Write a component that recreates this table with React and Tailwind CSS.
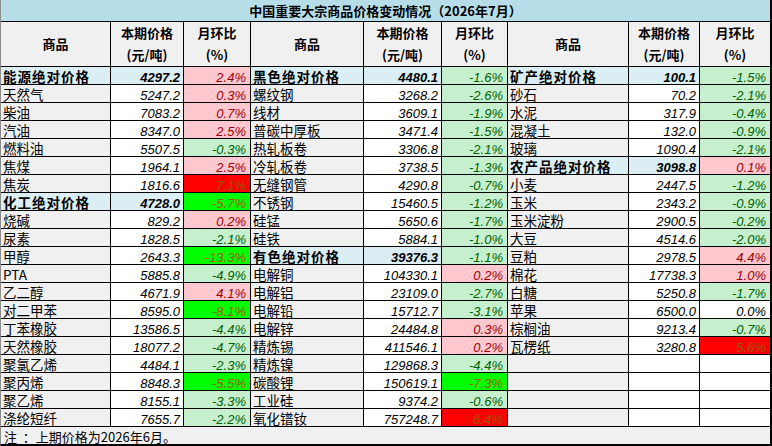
import React from 'react';

// 商品数据：[名称, 本期价格, 月环比, 色标, 是否分类]
// 色标: r 浅红, g 浅绿, R 大红, G 亮绿, n 无
const left = [
  ['能源绝对价格', '4297.2', '2.4%', 'r', true],
  ['天然气', '5247.2', '0.3%', 'r'],
  ['柴油', '7083.2', '0.7%', 'r'],
  ['汽油', '8347.0', '2.5%', 'r'],
  ['燃料油', '5507.5', '-0.3%', 'g'],
  ['焦煤', '1964.1', '2.5%', 'r'],
  ['焦炭', '1816.6', '7.1%', 'R'],
  ['化工绝对价格', '4728.0', '-5.7%', 'G', true],
  ['烧碱', '829.2', '0.2%', 'r'],
  ['尿素', '1828.5', '-2.1%', 'g'],
  ['甲醇', '2643.3', '-13.3%', 'G'],
  ['PTA', '5885.8', '-4.9%', 'g'],
  ['乙二醇', '4671.9', '4.1%', 'r'],
  ['对二甲苯', '8595.0', '-8.1%', 'G'],
  ['丁苯橡胶', '13586.5', '-4.4%', 'g'],
  ['天然橡胶', '18077.2', '-4.7%', 'g'],
  ['聚氯乙烯', '4484.1', '-2.3%', 'g'],
  ['聚丙烯', '8848.3', '-5.5%', 'G'],
  ['聚乙烯', '8155.1', '-3.3%', 'g'],
  ['涤纶短纤', '7655.7', '-2.2%', 'g'],
];

const middle = [
  ['黑色绝对价格', '4480.1', '-1.6%', 'g', true],
  ['螺纹钢', '3268.2', '-2.6%', 'g'],
  ['线材', '3609.1', '-1.9%', 'g'],
  ['普碳中厚板', '3471.4', '-1.5%', 'g'],
  ['热轧板卷', '3306.8', '-2.1%', 'g'],
  ['冷轧板卷', '3738.5', '-1.3%', 'g'],
  ['无缝钢管', '4290.8', '-0.7%', 'g'],
  ['不锈钢', '15460.5', '-1.2%', 'g'],
  ['硅锰', '5650.6', '-1.7%', 'g'],
  ['硅铁', '5884.1', '-1.0%', 'g'],
  ['有色绝对价格', '39376.3', '-1.1%', 'g', true],
  ['电解铜', '104330.1', '0.2%', 'r'],
  ['电解铝', '23109.0', '-2.7%', 'g'],
  ['电解铅', '15712.7', '-3.1%', 'g'],
  ['电解锌', '24484.8', '0.3%', 'r'],
  ['精炼锡', '411546.1', '0.2%', 'r'],
  ['精炼镍', '129868.3', '-4.4%', 'g'],
  ['碳酸锂', '150619.1', '-7.3%', 'G'],
  ['工业硅', '9374.2', '-0.6%', 'g'],
  ['氧化镨钕', '757248.7', '6.4%', 'R'],
];

const right = [
  ['矿产绝对价格', '100.1', '-1.5%', 'g', true],
  ['砂石', '70.2', '-2.1%', 'g'],
  ['水泥', '317.9', '-0.4%', 'g'],
  ['混凝土', '132.0', '-0.9%', 'g'],
  ['玻璃', '1090.4', '-2.1%', 'g'],
  ['农产品绝对价格', '3098.8', '0.1%', 'r', true],
  ['小麦', '2447.5', '-1.2%', 'g'],
  ['玉米', '2343.2', '-0.9%', 'g'],
  ['玉米淀粉', '2900.5', '-0.2%', 'g'],
  ['大豆', '4514.6', '-2.0%', 'g'],
  ['豆粕', '2978.5', '4.4%', 'r'],
  ['棉花', '17738.3', '1.0%', 'r'],
  ['白糖', '5250.8', '-1.7%', 'g'],
  ['苹果', '6500.0', '0.0%', 'n'],
  ['棕榈油', '9213.4', '-0.7%', 'g'],
  ['瓦楞纸', '3280.8', '5.6%', 'R'],
  ['', '', '', 'n'],
  ['', '', '', 'n'],
  ['', '', '', 'n'],
  ['', '', '', 'n'],
];

const pctStyle = {
  r: 'bg-[#ffc7ce] text-[#9c0006]',
  g: 'bg-[#c6efce] text-[#006100]',
  R: 'bg-[#ff0000] text-[#9c5700]',
  G: 'bg-[#00ff00] text-[#9c5700]',
  n: 'bg-white text-black',
};

const cjk = "font-['Noto_Sans_CJK_SC',sans-serif]";
const num = "font-['Liberation_Sans','Noto_Sans_CJK_SC',sans-serif]";

const HeaderCells = () => (
  <>
    <div className={`bg-[#f0f0f0] flex items-center justify-center text-[13px] font-bold ${cjk}`}>商品</div>
    <div className={`bg-[#f0f0f0] flex flex-col items-center justify-center text-[13px] font-bold leading-[22px] ${cjk}`}>
      <span>本期价格</span>
      <span>(元/吨)</span>
    </div>
    <div className={`bg-[#f0f0f0] flex flex-col items-center justify-center text-[13px] font-bold leading-[22px] ${cjk}`}>
      <span>月环比</span>
      <span>(%)</span>
    </div>
  </>
);

const ItemCells = ({ item }) => {
  const [name, price, pct, tone, cat] = item;
  return (
    <>
      <div
        className={`${cat ? 'bg-[#daeef3] font-bold tracking-[1px]' : 'bg-[#f0f0f0]'} flex items-end pl-[2px] text-[13.5px] leading-[15px] whitespace-nowrap ${cjk}`}
      >
        {name}
      </div>
      <div
        className={`${cat ? 'bg-[#daeef3] font-bold' : 'bg-white'} flex items-end justify-end pr-[3px] italic text-[13px] leading-[13px] ${num}`}
      >
        {price}
      </div>
      <div className={`${pctStyle[tone]} flex items-end justify-end pr-[4px] italic text-[13px] leading-[13px] ${num}`}>
        {pct}
      </div>
    </>
  );
};

export default function App() {
  return (
    <div className="w-[772px] h-[446px] bg-white text-black overflow-hidden">
      <div className="grid grid-cols-[109px_72px_66px_112px_77px_65px_120px_70px_70px] grid-rows-[21px_44px_repeat(20,17px)_17px] gap-px bg-black border-l border-l-[#8c8c8c] border-r-2 border-r-black border-b-2 border-b-black">
        {/* 标题 */}
        <div className={`col-span-9 bg-[#b7dee8] flex items-center justify-center text-[13px] font-bold ${cjk}`}>
          中国重要大宗商品价格变动情况（2026年7月）
        </div>

        {/* 表头 */}
        <HeaderCells />
        <HeaderCells />
        <HeaderCells />

        {/* 数据行 */}
        {left.map((item, i) => (
          <React.Fragment key={i}>
            <ItemCells item={item} />
            <ItemCells item={middle[i]} />
            <ItemCells item={right[i]} />
          </React.Fragment>
        ))}

        {/* 注释 */}
        <div className={`col-span-9 bg-[#f0f0f0] flex items-end pl-[3px] text-[13px] leading-[15px] whitespace-pre ${cjk}`}>
          注  ：上期价格为2026年6月。
        </div>
      </div>
    </div>
  );
}
